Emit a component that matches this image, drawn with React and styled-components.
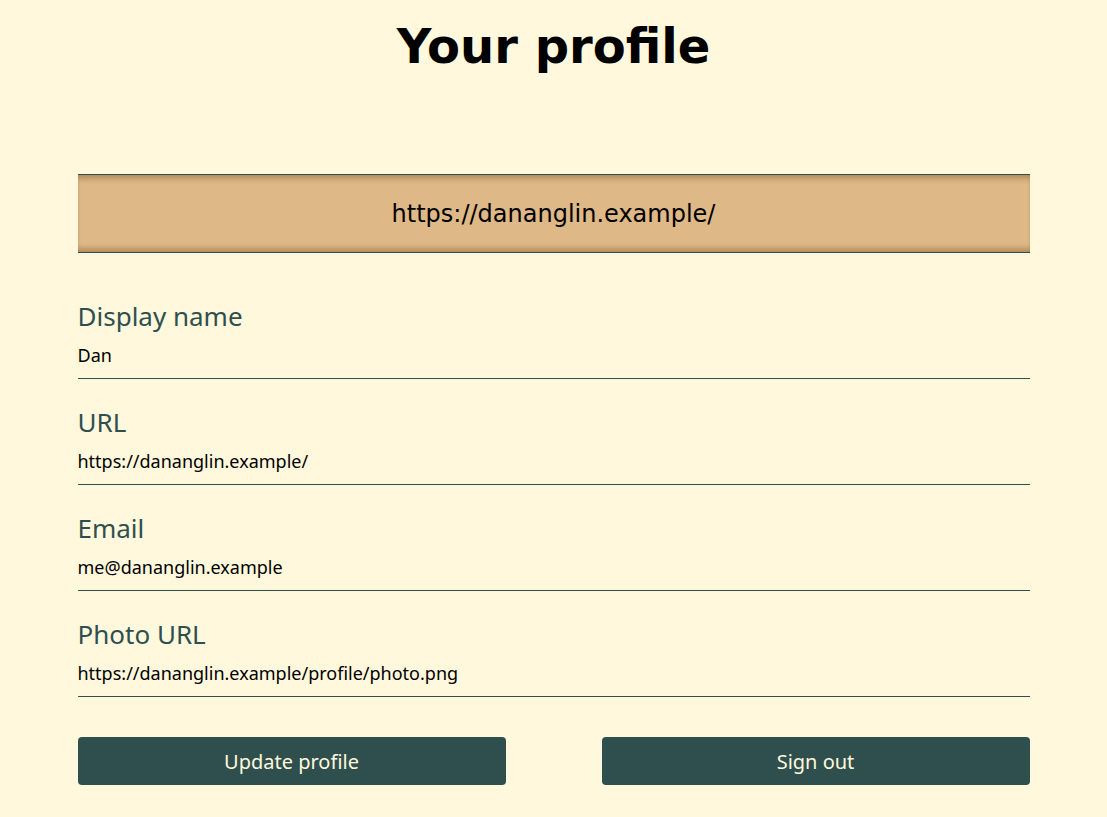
import styled, { createGlobalStyle } from 'styled-components';

const GlobalStyle = createGlobalStyle`
  body {
    margin: 0;
    background-color: cornsilk;
    font-family: "DejaVu Sans", sans-serif;
  }
`;

const StyledPage = styled.main`
  width: 952px;
  margin: 0 auto;
  padding-top: 18px;
`;

const StyledTitle = styled.h1`
  margin: 0;
  text-align: center;
  font-family: "DejaVu Sans", sans-serif;
  font-size: 48px;
  font-weight: bold;
  color: #000;
`;

const StyledBanner = styled.div`
  margin-top: 100px;
  height: 77px;
  display: flex;
  align-items: center;
  justify-content: center;
  background-color: burlywood;
  border-top: 1px solid darkslategray;
  border-bottom: 1px solid darkslategray;
  box-shadow: inset 0 7px 6px -4px rgba(100, 55, 10, 0.4),
    inset 0 -7px 6px -4px rgba(100, 55, 10, 0.4);
  font-family: "DejaVu Sans", sans-serif;
  font-size: 24px;
  color: #000;
`;

const StyledForm = styled.form`
  margin-top: 45px;
  display: flex;
  flex-direction: column;
`;

const StyledField = styled.div`
  display: flex;
  flex-direction: column;
  margin-bottom: 25px;
`;

const StyledLabel = styled.label`
  font-family: "Noto Sans", sans-serif;
  font-size: 26px;
  line-height: 36px;
  color: darkslategray;
  margin-bottom: 3px;
`;

const StyledInput = styled.input`
  border: none;
  border-bottom: 1px solid darkslategray;
  background: transparent;
  padding: 6px 0 11px;
  font-family: "Noto Sans", sans-serif;
  font-size: 18px;
  line-height: 24px;
  color: #000;
  outline: none;
`;

const StyledButtons = styled.div`
  display: flex;
  justify-content: space-between;
  margin-top: 15px;
`;

const StyledButton = styled.button`
  width: 428px;
  height: 48px;
  border: none;
  border-radius: 4px;
  background-color: darkslategray;
  color: cornsilk;
  font-family: "Noto Sans", sans-serif;
  font-size: 20px;
  cursor: pointer;
`;

const fields = [
  { id: 'displayName', label: 'Display name', value: 'Dan' },
  { id: 'url', label: 'URL', value: 'https://dananglin.example/' },
  { id: 'email', label: 'Email', value: 'me@dananglin.example' },
  {
    id: 'photoUrl',
    label: 'Photo URL',
    value: 'https://dananglin.example/profile/photo.png',
  },
];

export default function App() {
  return (
    <>
      <GlobalStyle />
      <StyledPage>
        <StyledTitle>Your profile</StyledTitle>
        <StyledBanner>https://dananglin.example/</StyledBanner>
        <StyledForm onSubmit={(e) => e.preventDefault()}>
          {fields.map((field) => (
            <StyledField key={field.id}>
              <StyledLabel htmlFor={field.id}>{field.label}</StyledLabel>
              <StyledInput id={field.id} defaultValue={field.value} />
            </StyledField>
          ))}
          <StyledButtons>
            <StyledButton type="submit">Update profile</StyledButton>
            <StyledButton type="button">Sign out</StyledButton>
          </StyledButtons>
        </StyledForm>
      </StyledPage>
    </>
  );
}
